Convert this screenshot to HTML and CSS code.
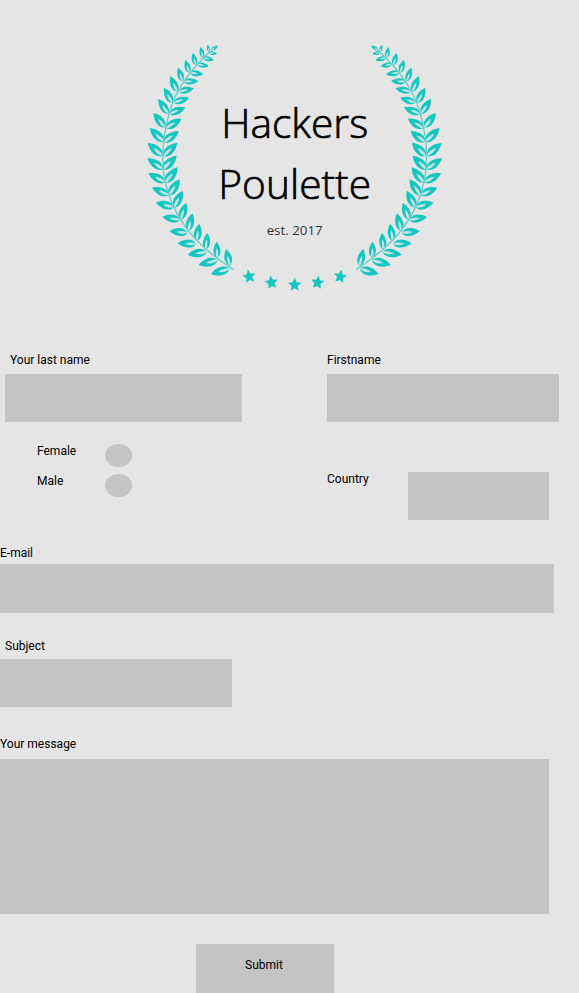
FILE: index.html
```html
<!DOCTYPE html>
<html lang="en">
<head>
<meta charset="utf-8">
<meta name="viewport" content="width=device-width, initial-scale=1">
<title>Hackers Poulette</title>
<link rel="stylesheet" href="styles.css">
</head>
<body>
<header class="header">
  <svg class="logo" viewBox="0 0 930 780" role="img" aria-label="Hackers Poulette, est. 2017">
    <defs>
      <g id="leaf">
        <path class="leaf" d="M0 0C.12 -.26 .55 -.33 1 0C.6 .31 .17 .26 0 0Z"/>
        <path class="slit" d="M-.02 .01C.12 -.11 .4 -.12 .6 0C.4 .08 .15 .09 -.02 .01Z"/>
      </g>
      <path id="star" class="star" d="M0 -20L6 -6L20 -5L9 5L12 19L0 12L-12 19L-9 5L-20 -5L-6 -6Z"/>
      <g id="branch">
        <use href="#leaf" transform="matrix(20 -13 13 20 214 45)"/>
        <use href="#leaf" transform="matrix(-4 -21 21 -4 207 50)"/>
        <use href="#leaf" transform="matrix(-7 -32 32 -7 189 68)"/>
        <use href="#leaf" transform="matrix(-10 -36 36 -10 168 90)"/>
        <use href="#leaf" transform="matrix(-12 -38 38 -12 148 113)"/>
        <use href="#leaf" transform="matrix(-14 -40 40 -14 128 138)"/>
        <use href="#leaf" transform="matrix(-21 -46 46 -21 112 170)"/>
        <use href="#leaf" transform="matrix(-25 -45 45 -25 97 203)"/>
        <use href="#leaf" transform="matrix(-30 -44 44 -30 85 236)"/>
        <use href="#leaf" transform="matrix(-36 -43 43 -36 76 277)"/>
        <use href="#leaf" transform="matrix(-43 -41 41 -43 72 320)"/>
        <use href="#leaf" transform="matrix(-45 -38 38 -45 68 362)"/>
        <use href="#leaf" transform="matrix(-47 -32 32 -47 69 402)"/>
        <use href="#leaf" transform="matrix(-51 -26 26 -51 76 441)"/>
        <use href="#leaf" transform="matrix(-50 -21 21 -50 86 479)"/>
        <use href="#leaf" transform="matrix(-54 -13 13 -54 102 516)"/>
        <use href="#leaf" transform="matrix(-53 -8 8 -53 120 554)"/>
        <use href="#leaf" transform="matrix(-55 -5 5 -55 143 593)"/>
        <use href="#leaf" transform="matrix(-55 -1 1 -55 168 626)"/>
        <use href="#leaf" transform="matrix(-57 9 -9 -57 200 650)"/>
        <use href="#leaf" transform="matrix(-56 15 -15 -56 232 675)"/>
        <use href="#leaf" transform="matrix(-55 16 -16 -55 268 701)"/>
        <use href="#leaf" transform="matrix(24 4 -4 24 207 53)"/>
        <use href="#leaf" transform="matrix(32 8 -8 32 190 68)"/>
        <use href="#leaf" transform="matrix(34 6 -6 34 172 88)"/>
        <use href="#leaf" transform="matrix(40 5 -5 40 150 113)"/>
        <use href="#leaf" transform="matrix(44 -2 2 44 131 140)"/>
        <use href="#leaf" transform="matrix(45 -10 10 45 117 170)"/>
        <use href="#leaf" transform="matrix(45 -15 15 45 102 203)"/>
        <use href="#leaf" transform="matrix(48 -20 20 48 88 237)"/>
        <use href="#leaf" transform="matrix(46 -29 29 46 78 280)"/>
        <use href="#leaf" transform="matrix(44 -34 34 44 72 322)"/>
        <use href="#leaf" transform="matrix(42 -41 41 42 70 364)"/>
        <use href="#leaf" transform="matrix(42 -42 42 42 68 404)"/>
        <use href="#leaf" transform="matrix(37 -47 47 37 76 444)"/>
        <use href="#leaf" transform="matrix(32 -49 49 32 87 482)"/>
        <use href="#leaf" transform="matrix(26 -51 51 26 102 518)"/>
        <use href="#leaf" transform="matrix(17 -51 51 17 122 554)"/>
        <use href="#leaf" transform="matrix(12 -53 53 12 145 588)"/>
        <use href="#leaf" transform="matrix(8 -52 52 8 170 618)"/>
        <use href="#leaf" transform="matrix(4 -49 49 4 198 643)"/>
        <use href="#leaf" transform="matrix(-2 -48 48 -2 232 668)"/>
        <use href="#leaf" transform="matrix(-12 -50 50 -12 270 692)"/>
        <path class="stem" d="M216 44C150 105 108 160 86 240C66 315 62 375 76 441C96 535 150 620 280 704"/>
      </g>
    </defs>
    <use href="#branch"/>
    <use href="#branch" transform="translate(928 0) scale(-1 1)"/>
    <use href="#star" transform="translate(327 723) rotate(-10)"/>
    <use href="#star" transform="translate(394 741) rotate(-8)"/>
    <use href="#star" transform="translate(464 748)"/>
    <use href="#star" transform="translate(533 741) rotate(8)"/>
    <use href="#star" transform="translate(601 723) rotate(10)"/>
    <text class="brand" x="464" y="308">Hackers</text>
    <text class="brand" x="464" y="492">Poulette</text>
    <text class="since" x="464" y="600">est. 2017</text>
  </svg>
</header>
<main>
  <form class="form">
    <div class="row names">
      <div class="field">
        <label class="inset" for="lastname">Your last name</label>
        <input class="control" id="lastname" name="lastname" type="text">
      </div>
      <div class="field">
        <label for="firstname">Firstname</label>
        <input class="control" id="firstname" name="firstname" type="text">
      </div>
    </div>
    <div class="row details">
      <div class="genders">
        <label for="female">Female</label>
        <input class="radio" id="female" name="gender" type="radio" value="female">
        <label for="male">Male</label>
        <input class="radio" id="male" name="gender" type="radio" value="male">
      </div>
      <div class="country">
        <label for="country">Country</label>
        <select class="control" id="country" name="country"></select>
      </div>
    </div>
    <div class="field email">
      <label for="email">E-mail</label>
      <input class="control" id="email" name="email" type="email">
    </div>
    <div class="field subject">
      <label class="inset" for="subject">Subject</label>
      <input class="control" id="subject" name="subject" type="text">
    </div>
    <div class="field message">
      <label for="message">Your message</label>
      <textarea class="control" id="message" name="message"></textarea>
    </div>
    <button class="submit" type="submit">Submit</button>
  </form>
</main>
</body>
</html>
```
FILE: styles.css
```css
* {
  box-sizing: border-box;
}

body {
  margin: 0;
  background: #e5e5e5;
  color: #000;
  font: 12px/14px Roboto, sans-serif;
}

.header {
  display: flex;
  justify-content: center;
  padding: 35px 0 0 11px;
}

.logo {
  width: 310px;
  height: 260px;
}

.leaf,
.star {
  fill: #16c7c1;
}

.slit {
  fill: #c5e3e2;
}

.stem {
  fill: none;
  stroke: #5fd0cb;
  stroke-width: 4;
}

.brand,
.since {
  font-family: "Open Sans", sans-serif;
  text-anchor: middle;
}

.brand {
  font-size: 122px;
  font-weight: 300;
  fill: #000;
  stroke: #000;
  stroke-width: 2;
  stroke-linejoin: round;
}

.since {
  font-size: 40px;
  fill: #333;
}

.form {
  display: flex;
  flex-direction: column;
  padding-top: 58px;
}

.row {
  display: grid;
  grid-template-columns: 237fr 232fr;
  column-gap: 85px;
  padding: 0 20px 0 5px;
}

.field {
  display: flex;
  flex-direction: column;
  gap: 7px;
}

.inset {
  padding-left: 5px;
}

.control {
  display: block;
  width: 100%;
  height: 48px;
  margin: 0;
  padding: 0 8px;
  border: 0;
  border-radius: 0;
  background: #c4c4c4;
  color: inherit;
  font: inherit;
  appearance: none;
}

.details {
  margin-top: 22px;
}

.genders {
  display: grid;
  grid-template-columns: 68px 27px;
  align-content: start;
  align-items: start;
  row-gap: 7px;
  padding-left: 32px;
}

.radio {
  width: 27px;
  height: 23px;
  margin: 0;
  border-radius: 50%;
  background: #c4c4c4;
  appearance: none;
}

.radio:checked {
  background: #16c7c1;
}

.country {
  display: grid;
  grid-template-columns: 81px 1fr;
  padding: 28px 10px 0 0;
}

.email {
  gap: 4px;
  margin: 26px 25px 0 0;
}

.email .control {
  height: 49px;
}

.subject {
  gap: 6px;
  width: 40%;
  margin-top: 26px;
}

.message {
  gap: 8px;
  margin: 30px 30px 0 0;
}

.message .control {
  height: 155px;
  padding: 8px;
  resize: none;
}

.submit {
  width: 138px;
  height: 49px;
  margin: 30px 49px 0 0;
  padding: 0 2px 7px 0;
  align-self: center;
  border: 0;
  background: #c4c4c4;
  color: inherit;
  font: inherit;
}
```
